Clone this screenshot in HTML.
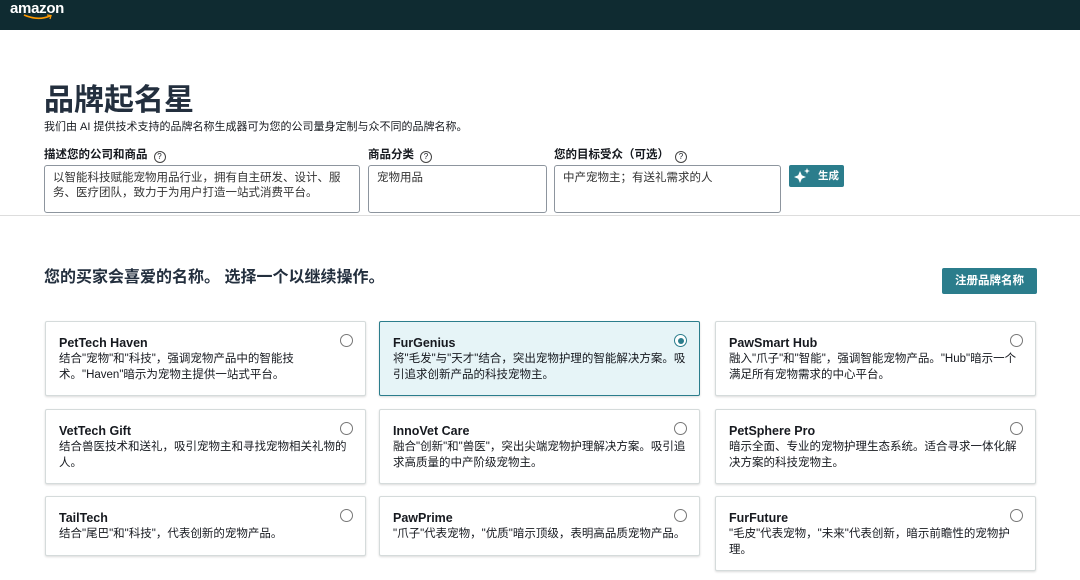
<!DOCTYPE html>
<html><head><meta charset="utf-8"><style>
*{margin:0;padding:0;box-sizing:border-box}
body{width:1080px;height:580px;overflow:hidden;background:#fff;font-family:"Liberation Sans","Noto Sans CJK SC",sans-serif;color:#16191f;position:relative}
.hdr{position:absolute;left:0;top:0;width:1080px;height:30px;background:#0f2b31}
.logo{position:absolute;left:10px;top:0;color:#fff;font-weight:bold;font-size:15px;letter-spacing:-.3px}
.abs{position:absolute}
h1{position:absolute;left:44px;top:75px;font-size:30px;font-weight:bold;color:#232f3e}
.sub{left:44px;top:118px;font-size:11px}
.lbl{font-size:11.5px;font-weight:bold;top:146px}
.q{display:inline-block;width:12px;height:12px;border:1px solid #444;border-radius:50%;font-size:8px;text-align:center;line-height:10px;font-weight:normal;margin-left:6px;vertical-align:-1px}
.ta{position:absolute;top:165px;height:48px;border:1px solid #8d959e;border-radius:3px;padding:5px 8px;font-size:11.5px;line-height:15px;color:#333}
.btn{left:789px;top:165px;width:55px;height:22px;background:#2b7d8c;border-radius:2px;color:#fff;font-size:10.5px;font-weight:bold;line-height:22px;padding-left:29px}
.line{left:0;top:215px;width:1080px;height:1px;background:#ddd}
h2{position:absolute;left:44px;top:263px;font-size:16px;font-weight:bold;color:#232f3e}
.reg{left:942px;top:268px;width:95px;height:26px;background:#2b7d8c;border-radius:2px;color:#fff;font-size:11.5px;font-weight:bold;text-align:center;line-height:26px}
.card{position:absolute;width:321px;border:1px solid #d5dbdb;border-radius:2px;box-shadow:0 1px 2px rgba(0,0,0,.15);padding:13px 13px 0 13px;background:#fff}
.card.sel{background:#e6f4f7;border:1.5px solid #2b7d8c}
.card b{display:block;font-size:12.5px;color:#16191f;line-height:16px}
.card p{font-size:11.5px;line-height:16px;color:#16191f;width:298px}
.r{position:absolute;right:12px;top:12px;width:13px;height:13px;border:1px solid #777;border-radius:50%;background:#fff}
.sel .r{border-color:#2b7d8c}
.sel .r:after{content:"";position:absolute;left:2.5px;top:2.5px;width:6px;height:6px;border-radius:50%;background:#2b7d8c}
</style></head><body>
<div class="hdr"><div class="logo">amazon<svg class="abs" style="left:13px;top:14px" width="30" height="6" viewBox="0 0 30 6"><path d="M1 1 Q15 7 27 2" stroke="#f90" stroke-width="1.6" fill="none"/><path d="M24 1 L28 1.5 L27 5" stroke="#f90" stroke-width="1.3" fill="none"/></svg></div></div>
<h1>品牌起名星</h1>
<div class="abs sub">我们由 AI 提供技术支持的品牌名称生成器可为您的公司量身定制与众不同的品牌名称。</div>
<div class="abs lbl" style="left:44px">描述您的公司和商品<span class="q">?</span></div>
<div class="abs lbl" style="left:368px">商品分类<span class="q">?</span></div>
<div class="abs lbl" style="left:554px">您的目标受众（可选）<span class="q">?</span></div>
<div class="ta" style="left:44px;width:316px">以智能科技赋能宠物用品行业，拥有自主研发、设计、服务、医疗团队，致力于为用户打造一站式消费平台。</div>
<div class="ta" style="left:368px;width:179px">宠物用品</div>
<div class="ta" style="left:554px;width:227px">中产宠物主；有送礼需求的人</div>
<div class="abs btn"><svg class="abs" style="left:4px;top:2px" width="20" height="18" viewBox="0 0 20 18"><path d="M7 4 L8.8 8.2 L13 10 L8.8 11.8 L7 16 L5.2 11.8 L1 10 L5.2 8.2Z" fill="#fff"/><path d="M14 1 L14.8 3.2 L17 4 L14.8 4.8 L14 7 L13.2 4.8 L11 4 L13.2 3.2Z" fill="#fff"/></svg>生成</div>
<div class="abs line"></div>
<h2>您的买家会喜爱的名称。 选择一个以继续操作。</h2>
<div class="abs reg">注册品牌名称</div>

<div class="card" style="left:45px;top:321px;height:75px"><div class="r"></div><b>PetTech Haven</b><p style="width:240px">结合"宠物"和"科技"，强调宠物产品中的智能技术。"Haven"暗示为宠物主提供一站式平台。</p></div>
<div class="card sel" style="left:379px;top:321px;height:75px"><div class="r"></div><b>FurGenius</b><p style="width:300px">将"毛发"与"天才"结合，突出宠物护理的智能解决方案。吸引追求创新产品的科技宠物主。</p></div>
<div class="card" style="left:715px;top:321px;height:75px"><div class="r"></div><b>PawSmart Hub</b><p>融入"爪子"和"智能"，强调智能宠物产品。"Hub"暗示一个满足所有宠物需求的中心平台。</p></div>

<div class="card" style="left:45px;top:409px;height:75px"><div class="r"></div><b>VetTech Gift</b><p>结合兽医技术和送礼，吸引宠物主和寻找宠物相关礼物的人。</p></div>
<div class="card" style="left:379px;top:409px;height:75px"><div class="r"></div><b>InnoVet Care</b><p>融合"创新"和"兽医"，突出尖端宠物护理解决方案。吸引追求高质量的中产阶级宠物主。</p></div>
<div class="card" style="left:715px;top:409px;height:75px"><div class="r"></div><b>PetSphere Pro</b><p>暗示全面、专业的宠物护理生态系统。适合寻求一体化解决方案的科技宠物主。</p></div>

<div class="card" style="left:45px;top:496px;height:60px"><div class="r"></div><b>TailTech</b><p>结合"尾巴"和"科技"，代表创新的宠物产品。</p></div>
<div class="card" style="left:379px;top:496px;height:60px"><div class="r"></div><b>PawPrime</b><p>"爪子"代表宠物，"优质"暗示顶级，表明高品质宠物产品。</p></div>
<div class="card" style="left:715px;top:496px;height:75px"><div class="r"></div><b>FurFuture</b><p>"毛皮"代表宠物，"未来"代表创新，暗示前瞻性的宠物护理。</p></div>
</body></html>
